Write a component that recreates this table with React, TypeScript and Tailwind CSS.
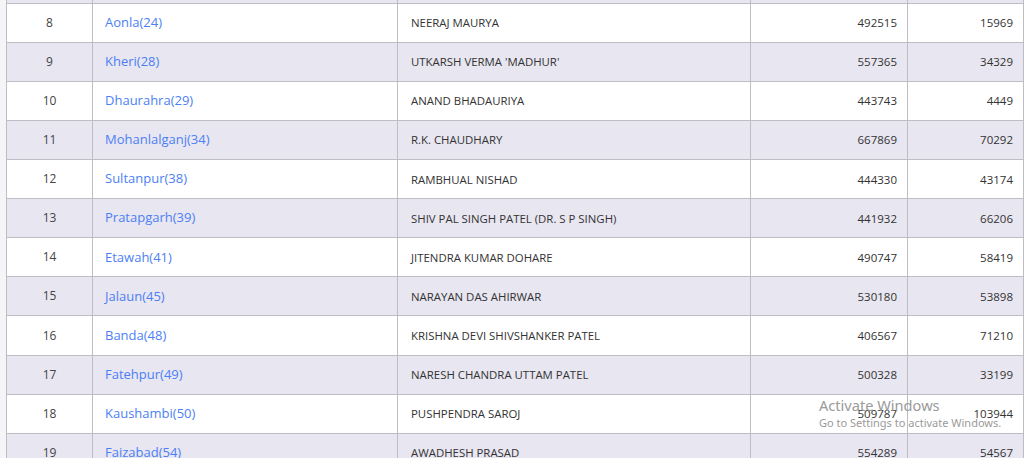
import React from "react";

const rows: [number, string, string, string, string][] = [
  [7, "", "", "", ""],
  [8, "Aonla(24)", "NEERAJ MAURYA", "492515", "15969"],
  [9, "Kheri(28)", "UTKARSH VERMA 'MADHUR'", "557365", "34329"],
  [10, "Dhaurahra(29)", "ANAND BHADAURIYA", "443743", "4449"],
  [11, "Mohanlalganj(34)", "R.K. CHAUDHARY", "667869", "70292"],
  [12, "Sultanpur(38)", "RAMBHUAL NISHAD", "444330", "43174"],
  [13, "Pratapgarh(39)", "SHIV PAL SINGH PATEL (DR. S P SINGH)", "441932", "66206"],
  [14, "Etawah(41)", "JITENDRA KUMAR DOHARE", "490747", "58419"],
  [15, "Jalaun(45)", "NARAYAN DAS AHIRWAR", "530180", "53898"],
  [16, "Banda(48)", "KRISHNA DEVI SHIVSHANKER PATEL", "406567", "71210"],
  [17, "Fatehpur(49)", "NARESH CHANDRA UTTAM PATEL", "500328", "33199"],
  [18, "Kaushambi(50)", "PUSHPENDRA SAROJ", "509787", "103944"],
  [19, "Faizabad(54)", "AWADHESH PRASAD", "554289", "54567"],
];

export default function App() {
  return (
    <div
      className="relative h-[458px] w-[1024px] overflow-hidden bg-[#f5f5f8] pl-[6px]"
      style={{ fontFamily: "'Open Sans', 'Noto Sans', sans-serif" }}
    >
      <div className="-mt-[35.4px] w-[1017px] border-l border-[#bdbdc4]">
        {rows.map(([n, place, name, votes, margin]) => (
          <div
            key={n}
            className={
              "grid h-[39.1px] grid-cols-[86px_305px_353px_157px_116px] " +
              (n % 2 === 1 ? "bg-[#e8e6f1]" : "bg-white")
            }
          >
            <div className="flex items-center justify-center border-b border-r border-[#bdbdc4] text-[12px] text-[#444]">
              {n}
            </div>
            <div className="flex items-center border-b border-r border-[#bdbdc4] pl-[12px] text-[13px] text-[#4c7ff4]">
              {place}
            </div>
            <div className="flex items-center border-b border-r border-[#bdbdc4] pl-[13px] text-[11.4px] text-[#333]">
              {name}
            </div>
            <div className="flex items-center justify-end border-b border-r border-[#bdbdc4] pr-[10px] text-[11.5px] text-[#333]">
              {votes}
            </div>
            <div className="flex items-center justify-end border-b border-r border-[#bdbdc4] pr-[10px] text-[11.5px] text-[#333]">
              {margin}
            </div>
          </div>
        ))}
      </div>
      <div
        className="pointer-events-none absolute left-[819px] top-[398px] leading-none text-[#9a9a9a]"
        style={{ fontFamily: "'Noto Sans', 'Open Sans', sans-serif" }}
      >
        <div className="text-[14.6px]">Activate Windows</div>
        <div className="mt-[4px] text-[11px]">Go to Settings to activate Windows.</div>
      </div>
    </div>
  );
}
